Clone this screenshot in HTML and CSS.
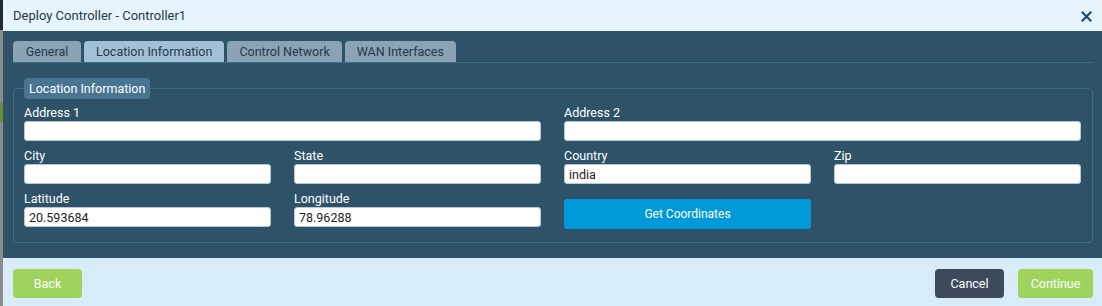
FILE: index.html
```html
<!DOCTYPE html>
<html lang="en">
<head>
    <meta charset="UTF-8">
    <title>Deploy Controller</title>
    <link rel="stylesheet" href="styles.css">
</head>
<body>
<div class="page">
    <div class="backdrop"></div>
    <div class="dialog">
        <div class="dialog-head">
            <span class="title">Deploy Controller - Controller1</span>
            <svg class="close" width="11" height="11" viewBox="0 0 11 11">
                <path d="M1.5 1.5 L9.5 9.5 M9.5 1.5 L1.5 9.5" stroke="#1d4b6c" stroke-width="2.2" stroke-linecap="square"/>
            </svg>
        </div>

        <div class="dialog-body">
            <div class="tabs">
                <div class="tab first">General</div>
                <div class="tab active">Location Information</div>
                <div class="tab">Control Network</div>
                <div class="tab">WAN Interfaces</div>
            </div>

            <fieldset class="group">
                <legend>Location Information</legend>
                <div class="grid">
                    <div class="field wide">
                        <label>Address 1</label>
                        <input type="text">
                    </div>
                    <div class="field wide">
                        <label>Address 2</label>
                        <input type="text">
                    </div>
                    <div class="field">
                        <label>City</label>
                        <input type="text">
                    </div>
                    <div class="field">
                        <label>State</label>
                        <input type="text">
                    </div>
                    <div class="field">
                        <label>Country</label>
                        <input type="text" value="india">
                    </div>
                    <div class="field">
                        <label>Zip</label>
                        <input type="text">
                    </div>
                    <div class="field">
                        <label>Latitude</label>
                        <input type="text" value="20.593684">
                    </div>
                    <div class="field">
                        <label>Longitude</label>
                        <input type="text" value="78.96288">
                    </div>
                    <div class="field">
                        <button class="btn-coords">Get Coordinates</button>
                    </div>
                </div>
            </fieldset>
        </div>

        <div class="dialog-foot">
            <button class="btn green">Back</button>
            <div class="foot-right">
                <button class="btn dark">Cancel</button>
                <button class="btn green wide-btn">Continue</button>
            </div>
        </div>
    </div>
</div>
</body>
</html>
```

FILE: styles.css
```css
body { margin: 0; font-family: Roboto, "Open Sans", sans-serif; background: #8b8b8b; }
.page { display: flex; height: 306px; overflow: hidden; }
.backdrop { width: 3px; flex: none; background: linear-gradient(#1e2b34 0, #1e2b34 30px, #8b8b8b 30px, #8b8b8b 103px, #6e8a3c 103px, #6e8a3c 122px, #8b8b8b 122px); }
.dialog { flex: 1; display: flex; flex-direction: column; }

.dialog-head { height: 31px; background: #e6f4fd; display: flex; align-items: center; justify-content: space-between; padding: 0 10px 0 10px; }
.title { font-size: 13px; color: #24394b; }
.close { margin-top: 1px; }

.dialog-body { background: #2e5369; padding: 10px 9px 15px 10px; }
.tabs { display: flex; gap: 2px; border-bottom: 1px solid #3f6b83; }
.tab { height: 21px; line-height: 21px; padding: 0 12px; font-size: 12.5px; color: #26394a; background: #8aa3b6; border-radius: 4px 4px 0 0; margin-right: 1px; text-align: center; }
.tab.first { min-width: 44px; }
.tab.active { background: #a3c1d6; }

.group { margin: 15px 0 0 0; padding: 0 11px 15px 10px; border: 1px solid #3f6b83; border-radius: 4px; }
.group legend { font-size: 12.5px; color: #fff; background: #487590; padding: 0 5px; height: 21px; line-height: 21px; border-radius: 4px; }
.grid { display: grid; grid-template-columns: repeat(4, 1fr); column-gap: 23px; row-gap: 7px; margin-top: 6px; }
.field { display: flex; flex-direction: column; justify-content: flex-end; }
.field.wide { grid-column: span 2; }
.field label { font-size: 12.5px; color: #fff; line-height: 16px; }
.field input { height: 20px; box-sizing: border-box; border: 1px solid #b9c9d4; border-radius: 3px; padding: 0 4px; font-family: inherit; font-size: 12.5px; color: #222; background: #fff; }
.btn-coords { height: 30px; margin-bottom: -2px; border: 0; border-radius: 3px; background: #0099d9; color: #fff; font-family: inherit; font-size: 12px; }

.dialog-foot { flex: 1; background: #d7ecf7; display: flex; justify-content: space-between; align-items: flex-start; padding: 11px 9px 0 10px; }
.foot-right { display: flex; gap: 14px; }
.btn { width: 69px; height: 29px; border: 0; border-radius: 4px; color: #fff; font-family: inherit; font-size: 12.5px; }
.btn.green { background: #9fd35e; }
.btn.dark { background: #3d4a5b; }
.btn.wide-btn { width: 75px; }
```
